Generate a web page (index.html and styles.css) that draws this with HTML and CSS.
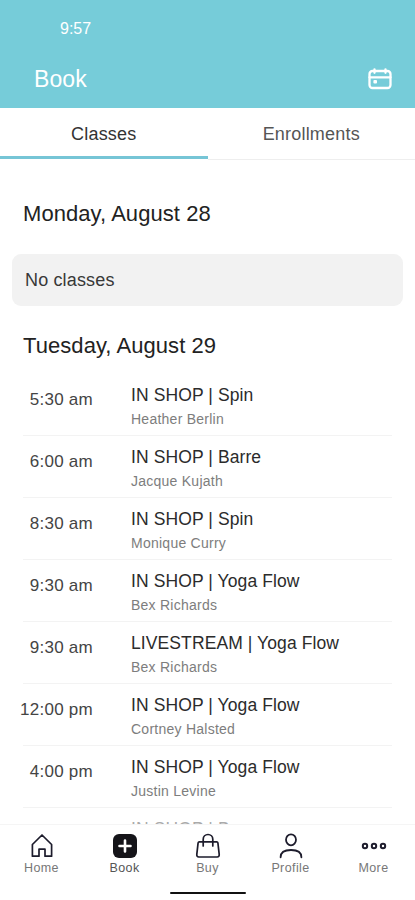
FILE: index.html
```html
<!DOCTYPE html>
<html lang="en">
<head>
<meta charset="utf-8">
<title>Book</title>
<link rel="stylesheet" href="styles.css">
</head>
<body>
<div class="app">
  <header class="header">
    <div class="clock">9:57</div>
    <div class="titlebar">
      <h1 class="title">Book</h1>
      <svg class="calendar" width="26" height="24" viewBox="0 0 26 24" fill="none" stroke="#fff" stroke-width="2.3" stroke-linecap="round"><rect x="2.500" y="4" width="21" height="17" rx="3"/><path d="M2.500 10.300h21M7.500 2.300v3.500M18.500 2.300v3.500"/><rect x="6.400" y="13" width="3.600" height="3.600" rx="1" fill="#fff" stroke="none"/></svg>
    </div>
  </header>
  <nav class="tabs">
    <div class="tab tab-active">Classes</div>
    <div class="tab">Enrollments</div>
  </nav>
  <main class="schedule">
    <h2 class="day day-first">Monday, August 28</h2>
    <div class="empty">No classes</div>
    <h2 class="day">Tuesday, August 29</h2>
    <ul class="list">
      <li class="row"><span class="time">5:30 am</span><div><div class="name">IN SHOP | Spin</div><div class="coach">Heather Berlin</div></div></li>
      <li class="row"><span class="time">6:00 am</span><div><div class="name">IN SHOP | Barre</div><div class="coach">Jacque Kujath</div></div></li>
      <li class="row"><span class="time">8:30 am</span><div><div class="name">IN SHOP | Spin</div><div class="coach">Monique Curry</div></div></li>
      <li class="row"><span class="time">9:30 am</span><div><div class="name">IN SHOP | Yoga Flow</div><div class="coach">Bex Richards</div></div></li>
      <li class="row"><span class="time">9:30 am</span><div><div class="name">LIVESTREAM | Yoga Flow</div><div class="coach">Bex Richards</div></div></li>
      <li class="row"><span class="time">12:00 pm</span><div><div class="name">IN SHOP | Yoga Flow</div><div class="coach">Cortney Halsted</div></div></li>
      <li class="row"><span class="time">4:00 pm</span><div><div class="name">IN SHOP | Yoga Flow</div><div class="coach">Justin Levine</div></div></li>
      <li class="row row-cut"><span class="time"></span><div><div class="name">IN SHOP | Barre</div></div></li>
    </ul>
  </main>
  <footer class="bottom">
    <div class="items">
      <div class="item"><svg width="26" height="26" viewBox="0 0 26 26" fill="none" stroke="#1d1c2c" stroke-width="1.700" stroke-linejoin="round"><path d="M3.400 11.500 13 2l9.600 9.500V23.200H16v-7h-6v7H3.400z"/></svg><span>Home</span></div>
      <div class="item item-active"><svg width="26" height="26" viewBox="0 0 26 26"><rect x="1" y="1" width="24" height="24" rx="6" fill="#151419"/><path d="M13 7.500v11M7.500 13h11" stroke="#fff" stroke-width="2.600" stroke-linecap="round"/></svg><span>Book</span></div>
      <div class="item"><svg width="26" height="26" viewBox="0 0 26 26" fill="none" stroke="#1d1c2c" stroke-width="1.700" stroke-linecap="round" stroke-linejoin="round"><path d="M4.300 8.800h17.400q1 0 1.200 1l1.300 11.500q.2 2.700-2 2.700H3.800q-2.200 0-2-2.700l1.300-11.500q.2-1 1.200-1zM8.200 13V6.300a4.800 4.800 0 0 1 9.600 0V13"/></svg><span>Buy</span></div>
      <div class="item"><svg width="26" height="26" viewBox="0 0 26 26" fill="none" stroke="#1d1c2c" stroke-width="1.800" stroke-linecap="round"><ellipse cx="13" cy="6.800" rx="5" ry="5.500"/><path d="M2.600 24.300c0-4.800 4-7.300 10.400-7.300s10.400 2.500 10.400 7.300"/></svg><span>Profile</span></div>
      <div class="item"><svg width="26" height="26" viewBox="0 0 26 26" fill="none" stroke="#1d1c2c" stroke-width="2"><circle cx="4" cy="13" r="2.200"/><circle cx="13" cy="13" r="2.200"/><circle cx="22" cy="13" r="2.200"/></svg><span>More</span></div>
    </div>
    <div class="handle"></div>
  </footer>
</div>
</body>
</html>
```
FILE: styles.css
```css
* { box-sizing: border-box; }
body { margin: 0; background: #fff; font-family: "Liberation Sans", Arial, sans-serif; color: #2b2b2b; }
h1, h2, ul { margin: 0; padding: 0; font-weight: 400; list-style: none; }
.app { width: 415px; height: 900px; display: flex; flex-direction: column; overflow: hidden; }
.header { height: 108px; flex: none; background: #76ccd9; color: #fff; padding-top: 19px; }
.clock { padding-left: 60px; font-size: 16px; line-height: 20px; }
.titlebar { display: flex; justify-content: space-between; align-items: center; height: 30px; margin-top: 25px; padding: 0 22px 0 34px; }
.title { font-size: 23px; line-height: 30px; letter-spacing: .1px; }
.tabs { display: flex; flex: none; height: 52px; }
.tab { flex: 1; text-align: center; font-size: 18px; line-height: 52px; letter-spacing: .2px; color: #555; border-bottom: 1px solid #eee; }
.tab-active { color: #333; border-bottom: 3px solid #76c5d6; height: 51px; }
.schedule { flex: 1; min-height: 0; overflow: hidden; }
.day { padding-left: 23px; font-size: 22px; line-height: 28px; letter-spacing: .06px; color: #222; }
.day-first { margin-top: 40px; }
.empty { margin: 26px 12px; height: 52px; border-radius: 9px; background: #f2f2f2; padding-left: 13px; font-size: 18px; line-height: 52px; letter-spacing: .15px; color: #383838; }
.list { margin: 14px 23px 0; }
.row { display: flex; height: 61.950px; padding-top: 11.200px; border-bottom: 1px solid #f3f3f3; }
.time { width: 70px; margin-right: 38px; display: flex; justify-content: flex-end; white-space: nowrap; font-size: 17px; line-height: 30px; letter-spacing: .25px; color: #444; }
.name { font-size: 17.500px; line-height: 20px; letter-spacing: .1px; }
.coach { margin-top: 5px; font-size: 14px; line-height: 18px; letter-spacing: .25px; color: #7d7d7d; }
.row-cut .name { color: #aaa; }
.bottom { flex: none; height: 76px; border-top: 1px solid #f5f5f5; background: #fff; padding-top: 8px; }
.items { display: flex; }
.item { flex: 1; display: flex; flex-direction: column; align-items: center; font-size: 12.500px; line-height: 15px; letter-spacing: .4px; color: #777; }
.item span { margin-top: 2px; }
.item-active { color: #555; }
.handle { width: 76px; height: 2px; margin: 16px auto 0; border-radius: 1px; background: #111; }
```
